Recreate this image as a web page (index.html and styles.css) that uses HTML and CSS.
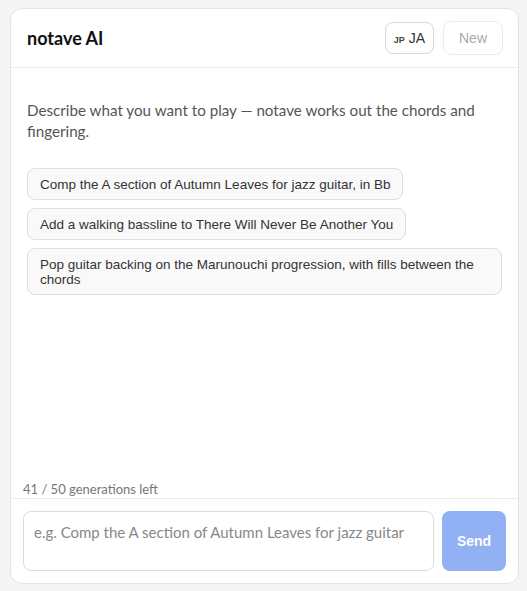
FILE: index.html
```html
<!DOCTYPE html>
<html lang="en">
<head>
<meta charset="utf-8">
<title>notave AI</title>
<link rel="stylesheet" href="styles.css">
</head>
<body>
<div class="card">
  <header class="header">
    <h1 class="title">notave AI</h1>
    <div class="actions">
      <button class="btn btn-lang"><span class="flag">JP</span> JA</button>
      <button class="btn btn-new">New</button>
    </div>
  </header>
  <main class="main">
    <p class="intro">Describe what you want to play — notave works out the chords and fingering.</p>
    <div class="chips">
      <button class="chip">Comp the A section of Autumn Leaves for jazz guitar, in Bb</button>
      <button class="chip">Add a walking bassline to There Will Never Be Another You</button>
      <button class="chip">Pop guitar backing on the Marunouchi progression, with fills between the chords</button>
    </div>
  </main>
  <div class="quota">41 / 50 generations left</div>
  <footer class="composer">
    <textarea class="input" placeholder="e.g. Comp the A section of Autumn Leaves for jazz guitar"></textarea>
    <button class="send">Send</button>
  </footer>
</div>
</body>
</html>
```
FILE: styles.css
```css
html, body {
  margin: 0;
  height: 100%;
}
body {
  box-sizing: border-box;
  padding: 8px 8px 7px 10px;
  background: #f5f5f5;
  font-family: "Lato", "Noto Sans", sans-serif;
}
.card {
  box-sizing: border-box;
  height: 100%;
  background: #fff;
  border: 1px solid #e4e4e4;
  border-radius: 12px;
  display: flex;
  flex-direction: column;
  overflow: hidden;
}
.header {
  display: flex;
  align-items: center;
  justify-content: space-between;
  padding: 12px 15px 12px 16px;
  border-bottom: 1px solid #ececec;
}
.title {
  margin: 0;
  font-size: 18px;
  font-weight: 700;
  color: #111;
}
.actions {
  display: flex;
  align-items: center;
  gap: 9px;
}
.btn {
  font-family: "Liberation Sans", Arial, sans-serif;
  background: #fff;
  border: 1px solid #e0e0e0;
  border-radius: 8px;
  font-size: 14px;
  cursor: pointer;
}
.btn-lang {
  height: 32px;
  padding: 0 8px;
  color: #333;
  border-color: #d6d6d6;
}
.flag {
  font-size: 9px;
  font-weight: 700;
  color: #444;
}
.btn-new {
  height: 34px;
  padding: 0 15px;
  color: #aaa;
  border-color: #ececec;
}
.main {
  flex: 1;
  padding: 32px 16px 16px;
}
.intro {
  margin: 0;
  font-size: 15.2px;
  line-height: 21px;
  color: #555;
}
.chips {
  margin-top: 26px;
  display: flex;
  flex-direction: column;
  align-items: flex-start;
  gap: 8px;
}
.chip {
  font-family: "Liberation Sans", Arial, sans-serif;
  font-size: 13.5px;
  line-height: 15px;
  color: #333;
  text-align: left;
  background: #f9f9f9;
  border: 1px solid #dedede;
  border-radius: 8px;
  padding: 7.5px 12px;
  cursor: pointer;
}
.quota {
  padding: 0 12px;
  font-size: 13px;
  line-height: 18px;
  color: #777;
}
.composer {
  display: flex;
  gap: 8px;
  padding: 12px;
  border-top: 1px solid #ececec;
}
.input {
  flex: 1;
  height: 60px;
  box-sizing: border-box;
  resize: none;
  border: 1px solid #dcdcdc;
  border-radius: 8px;
  padding: 10px;
  font-family: "Lato", "Noto Sans", sans-serif;
  font-size: 15px;
  line-height: 20px;
  color: #333;
}
.input::placeholder {
  color: #888;
}
.send {
  width: 64px;
  height: 60px;
  border: none;
  border-radius: 8px;
  background: #92b1f5;
  color: #fff;
  font-family: "Liberation Sans", Arial, sans-serif;
  font-size: 14px;
  font-weight: 700;
}
```
